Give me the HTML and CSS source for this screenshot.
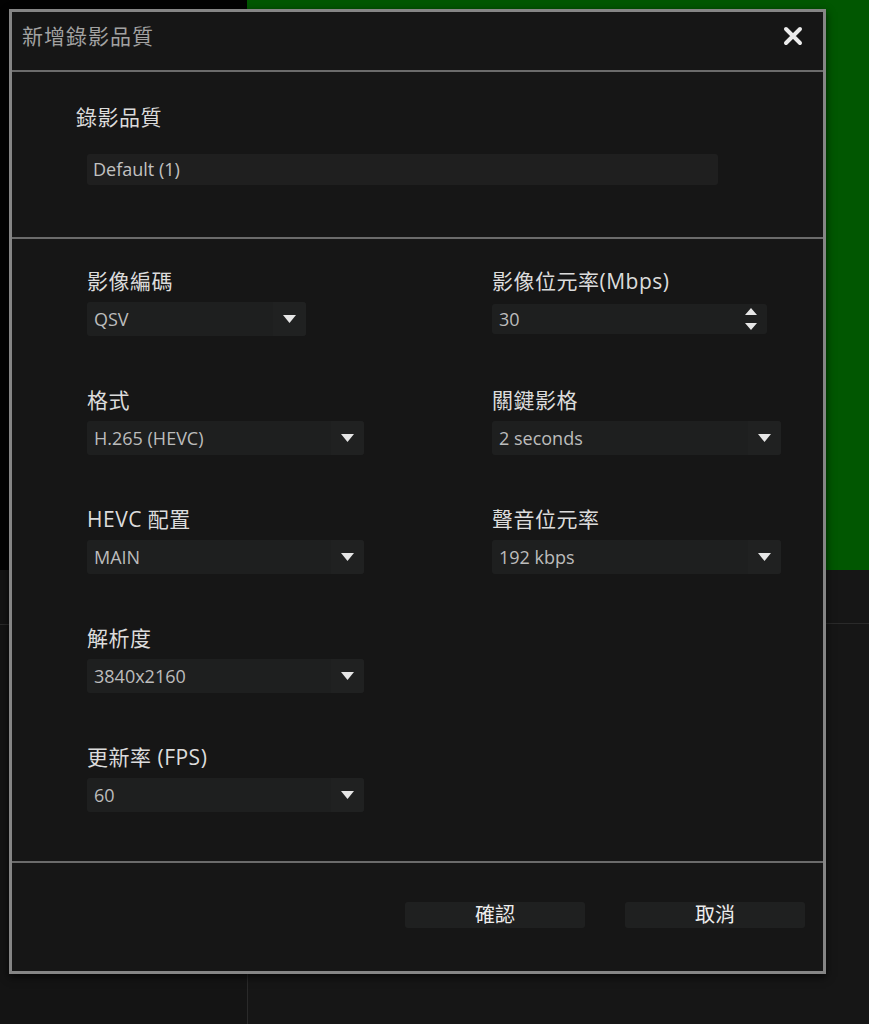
FILE: index.html
```html
<!DOCTYPE html>
<html>
<head>
  <meta charset="utf-8">
  <title>新增錄影品質</title>
  <link rel="stylesheet" href="styles.css">
</head>
<body>
  <div class="app">
    <div class="stage">
      <div class="stage-left"></div>
      <div class="stage-main"></div>
    </div>
    <div class="panel">
      <div class="panel-side">
        <div class="side-head"></div>
      </div>
      <div class="panel-main">
        <div class="toolbar"></div>
      </div>
    </div>
  </div>

  <div class="dialog">
    <div class="dialog-head">
      <span class="dialog-title">新增錄影品質</span>
      <button class="close">
        <svg width="20" height="20" viewBox="0 0 20 20">
          <path d="M3 3 L17 17 M17 3 L3 17" stroke="#ececec" stroke-width="4" stroke-linecap="round"/>
        </svg>
      </button>
    </div>

    <div class="section name-section">
      <div class="label">錄影品質</div>
      <div class="input name-input">Default (1)</div>
    </div>

    <div class="section fields">
      <div class="field">
        <div class="label">影像編碼</div>
        <div class="select w-short">
          <span class="value">QSV</span>
          <span class="arrow"><svg width="13" height="8" viewBox="0 0 13 8"><path d="M0 0 H13 L6.5 8 Z" fill="#e6e6e6"/></svg></span>
        </div>
      </div>
      <div class="field">
        <div class="label">影像位元率(Mbps)</div>
        <div class="select number">
          <span class="value">30</span>
          <span class="spin"><svg width="12" height="22" viewBox="0 0 12 22"><path d="M6 0 L12 7 H0 Z M0 15 H12 L6 22 Z" fill="#e6e6e6"/></svg></span>
        </div>
      </div>

      <div class="field">
        <div class="label">格式</div>
        <div class="select w-left">
          <span class="value">H.265 (HEVC)</span>
          <span class="arrow"><svg width="13" height="8" viewBox="0 0 13 8"><path d="M0 0 H13 L6.5 8 Z" fill="#e6e6e6"/></svg></span>
        </div>
      </div>
      <div class="field">
        <div class="label">關鍵影格</div>
        <div class="select w-right">
          <span class="value">2 seconds</span>
          <span class="arrow"><svg width="13" height="8" viewBox="0 0 13 8"><path d="M0 0 H13 L6.5 8 Z" fill="#e6e6e6"/></svg></span>
        </div>
      </div>

      <div class="field">
        <div class="label">HEVC 配置</div>
        <div class="select w-left">
          <span class="value">MAIN</span>
          <span class="arrow"><svg width="13" height="8" viewBox="0 0 13 8"><path d="M0 0 H13 L6.5 8 Z" fill="#e6e6e6"/></svg></span>
        </div>
      </div>
      <div class="field">
        <div class="label">聲音位元率</div>
        <div class="select w-right">
          <span class="value">192 kbps</span>
          <span class="arrow"><svg width="13" height="8" viewBox="0 0 13 8"><path d="M0 0 H13 L6.5 8 Z" fill="#e6e6e6"/></svg></span>
        </div>
      </div>

      <div class="field solo">
        <div class="label">解析度</div>
        <div class="select w-left">
          <span class="value">3840x2160</span>
          <span class="arrow"><svg width="13" height="8" viewBox="0 0 13 8"><path d="M0 0 H13 L6.5 8 Z" fill="#e6e6e6"/></svg></span>
        </div>
      </div>

      <div class="field solo">
        <div class="label">更新率 (FPS)</div>
        <div class="select w-left">
          <span class="value">60</span>
          <span class="arrow"><svg width="13" height="8" viewBox="0 0 13 8"><path d="M0 0 H13 L6.5 8 Z" fill="#e6e6e6"/></svg></span>
        </div>
      </div>
    </div>

    <div class="dialog-foot">
      <button class="btn">確認</button>
      <button class="btn">取消</button>
    </div>
  </div>
</body>
</html>
```

FILE: styles.css
```css
* {
  margin: 0;
  padding: 0;
  box-sizing: border-box;
  font-family: "Open Sans", "Noto Sans CJK TC", sans-serif;
}
body {
  background: #161616;
  width: 869px;
  height: 1024px;
  overflow: hidden;
}
.app {
  height: 1024px;
  display: flex;
  flex-direction: column;
}
.stage {
  height: 570px;
  display: flex;
}
.stage-left {
  width: 247px;
  background: #030303;
}
.stage-main {
  flex: 1;
  background: #015701;
}
.panel {
  flex: 1;
  display: flex;
}
.panel-side {
  width: 248px;
  border-right: 1px solid #2a2a2a;
  background: #141414;
}
.side-head {
  height: 55px;
  border-bottom: 1px solid #2a2a2a;
}
.panel-main {
  flex: 1;
}
.toolbar {
  height: 54px;
  border-bottom: 1px solid #2a2a2a;
}

.dialog {
  position: absolute;
  left: 9px;
  top: 9px;
  width: 817px;
  height: 965px;
  border: 3px solid #858585;
  background: #161616;
  box-shadow: 0 3px 8px rgba(0, 0, 0, 0.7);
  display: flex;
  flex-direction: column;
}
.dialog-head {
  height: 60px;
  padding: 0 20px 10px 10px;
  border-bottom: 2px solid #6b6b6b;
  display: flex;
  align-items: center;
  justify-content: space-between;
}
.dialog-title {
  font-size: 21px;
  letter-spacing: 1px;
  color: #a2a2a2;
  line-height: 28px;
}
.close {
  border: none;
  background: transparent;
  width: 20px;
  height: 20px;
  display: flex;
}

.section {
  border-bottom: 2px solid #6b6b6b;
}
.label {
  font-size: 21px;
  letter-spacing: 0.5px;
  line-height: 28px;
  color: #dcdcdc;
}
.name-section {
  height: 167px;
  padding: 31px 0 0 64px;
}
.input {
  height: 31px;
  margin: 23px 0 0 11px;
  padding-left: 6px;
  background: #1f1f1f;
  border-radius: 3px;
  font-size: 18px;
  line-height: 31px;
  color: #c2c2c2;
}
.name-input {
  width: 631px;
}

.fields {
  height: 624px;
  padding: 28px 0 0 75px;
  display: grid;
  grid-template-columns: 405px 1fr;
  grid-auto-rows: 69px;
  row-gap: 50px;
}
.solo {
  grid-column: 1;
}
.select {
  height: 34px;
  margin-top: 7px;
  display: flex;
  align-items: center;
  background: #1e1f1f;
  border-radius: 3px;
  color: #bcbcbc;
  font-size: 18px;
}
.value {
  flex: 1;
  padding-left: 7px;
}
.arrow {
  width: 33px;
  height: 34px;
  display: flex;
  align-items: center;
  justify-content: center;
  background: #202121;
  border-radius: 0 3px 3px 0;
}
.w-short {
  width: 219px;
}
.w-left {
  width: 277px;
}
.w-right {
  width: 289px;
}
.number {
  width: 275px;
  height: 30px;
  margin-top: 9px;
}
.spin {
  width: 32px;
  display: flex;
  justify-content: center;
}

.dialog-foot {
  flex: 1;
  padding: 0 18px 4px 0;
  display: flex;
  align-items: center;
  justify-content: flex-end;
  gap: 40px;
}
.btn {
  width: 180px;
  height: 26px;
  border: none;
  border-radius: 3px;
  background: #1f2020;
  color: #ededed;
  font-size: 20px;
  line-height: 26px;
}
```
